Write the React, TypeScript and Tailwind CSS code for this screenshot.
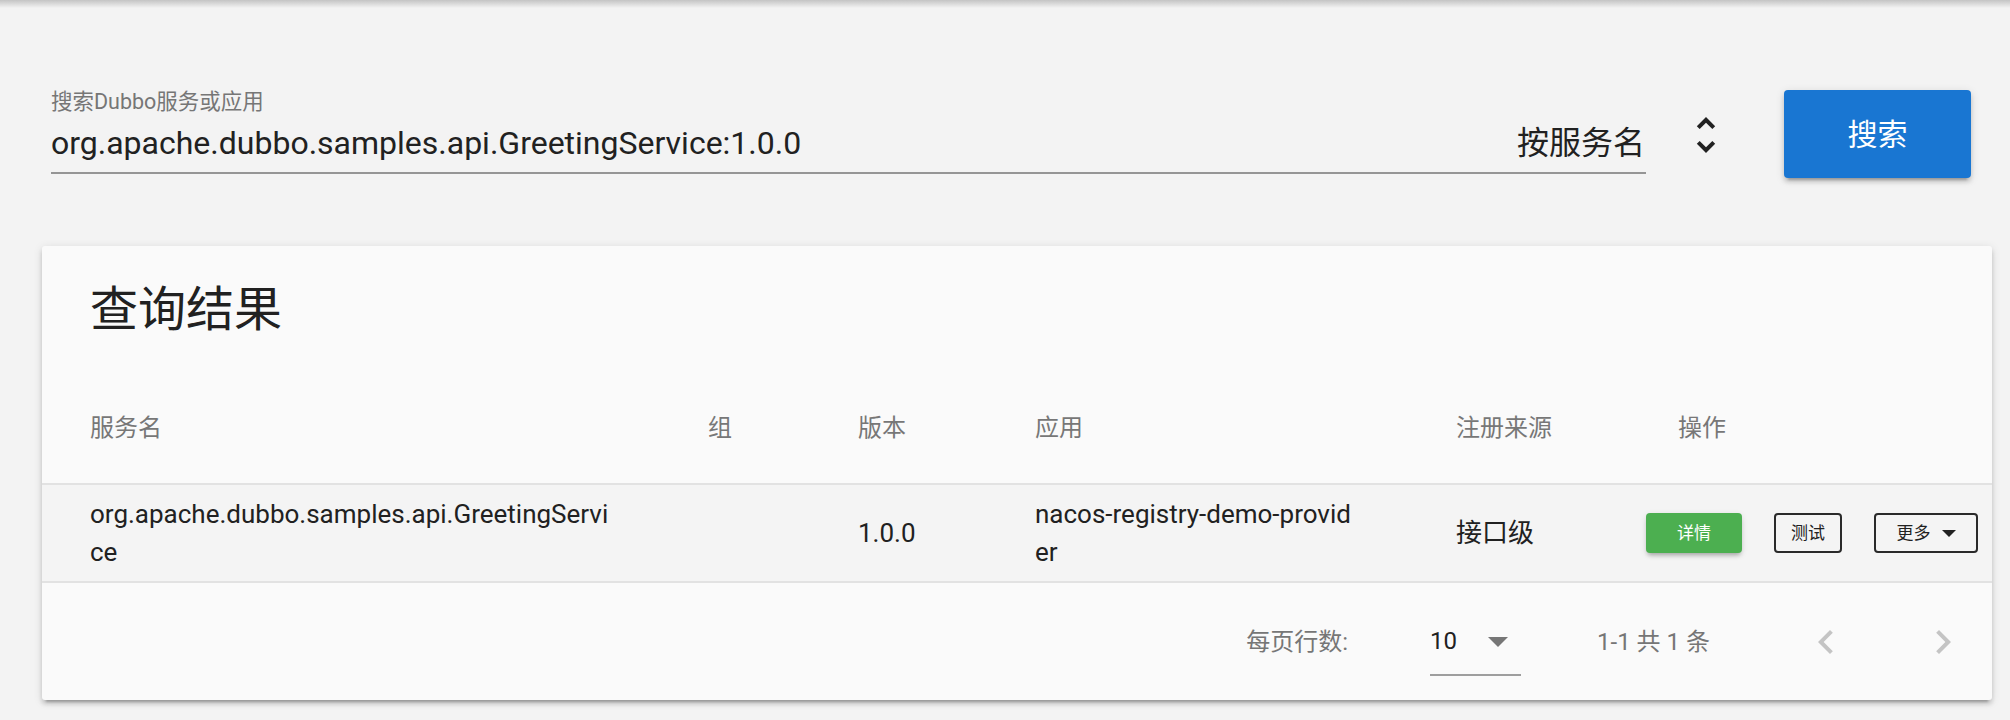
import React from "react";

type Col = { label: string; className: string };

const columns: Col[] = [
  { label: "服务名", className: "pl-[48px]" },
  { label: "组", className: "pl-[48px]" },
  { label: "版本", className: "pl-[48px]" },
  { label: "应用", className: "pl-[48px]" },
  { label: "注册来源", className: "pl-[48px]" },
  { label: "操作", className: "pl-[48px]" },
];

const UnfoldMore = () => (
  <svg viewBox="0 0 24 24" className="h-[48px] w-[48px] fill-[#212121]">
    <path d="M12 5.83L15.17 9l1.41-1.41L12 3 7.41 7.59 8.83 9 12 5.83zm0 12.34L8.83 15l-1.41 1.41L12 21l4.59-4.59L15.17 15 12 18.17z" />
  </svg>
);

const ArrowDrop = () => (
  <svg viewBox="0 0 24 24" className="h-[48px] w-[48px] fill-[#767676]">
    <path d="M7 10l5 5 5-5z" />
  </svg>
);

const ChevronLeft = () => (
  <svg viewBox="0 0 24 24" className="h-[48px] w-[48px] fill-[#c4c4c4]">
    <path d="M15.41 7.41L14 6l-6 6 6 6 1.41-1.41L10.83 12z" />
  </svg>
);

const ChevronRight = () => (
  <svg viewBox="0 0 24 24" className="h-[48px] w-[48px] fill-[#c4c4c4]">
    <path d="M10 6L8.59 7.41 13.17 12l-4.58 4.59L10 18l6-6z" />
  </svg>
);

const grid = "grid grid-cols-[618px_150px_177px_421px_222px_1fr]";

export default function App() {
  return (
    <div className="min-h-screen w-[2010px] overflow-hidden bg-[#f3f3f3] font-['Roboto','Noto_Sans_CJK_SC',sans-serif]">
      <div className="h-[8px] bg-linear-to-b from-[#c4c4c4] to-[#f3f3f3]" />

      {/* search bar */}
      <div className="flex pl-[51px] pt-[82px]">
        <div className="flex w-[1595px] flex-col">
          <div className="h-[24px] pt-[1px] text-[21.5px] leading-[22px] text-[#767676]">
            搜索Dubbo服务或应用
          </div>
          <div className="mt-[9px] flex items-center justify-between border-b-2 border-[#959595] pb-[9px] text-[32px] leading-[40px] text-[#212121]">
            <span>org.apache.dubbo.samples.api.GreetingService:1.0.0</span>
            <span className="pr-[1px]">按服务名</span>
          </div>
        </div>
        <div className="ml-[36px] mt-[21px]">
          <UnfoldMore />
        </div>
        <button className="ml-[54px] flex h-[88px] w-[187px] items-center justify-center rounded-[4px] bg-[#1976d2] text-[30px] text-white shadow-[0_6px_2px_-4px_rgba(0,0,0,0.2),0_4px_4px_0_rgba(0,0,0,0.14),0_2px_10px_0_rgba(0,0,0,0.12)]">
          搜索
        </button>
      </div>

      {/* result card */}
      <div className="ml-[42px] mt-[68px] w-[1950px] rounded-[3px] bg-[#fafafa] shadow-[0_6px_2px_-4px_rgba(0,0,0,0.2),0_4px_4px_0_rgba(0,0,0,0.14),0_2px_10px_0_rgba(0,0,0,0.12)]">
        <div className="h-[127px] pl-[48px] pt-[32px] text-[48px] leading-[64px] text-[#212121]">
          查询结果
        </div>

        <div className={`${grid} h-[112px] items-center border-b-2 border-[#e2e2e2] text-[24px] text-[#777777]`}>
          {columns.map((c) => (
            <div key={c.label} className={c.className}>
              {c.label}
            </div>
          ))}
        </div>

        <div className={`${grid} h-[98px] items-center border-b-2 border-[#e2e2e2] bg-[#f4f4f4] text-[26px] leading-[38px] text-[#212121]`}>
          <div className="break-all px-[48px]">org.apache.dubbo.samples.api.GreetingService</div>
          <div className="px-[48px]" />
          <div className="px-[48px]">1.0.0</div>
          <div className="break-all px-[48px]">nacos-registry-demo-provider</div>
          <div className="px-[48px]">接口级</div>
          <div className="flex items-center pl-[16px] text-[17px]">
            <button className="flex h-[40px] w-[96px] items-center justify-center rounded-[4px] bg-[#4caf50] text-white shadow-[0_4px_4px_-2px_rgba(0,0,0,0.25),0_2px_6px_0_rgba(0,0,0,0.12)]">
              详情
            </button>
            <button className="ml-[32px] flex h-[40px] w-[68px] items-center justify-center rounded-[4px] border-2 border-[#2a2a2a] text-[#212121]">
              测试
            </button>
            <button className="ml-[32px] flex h-[40px] w-[104px] items-center justify-center rounded-[4px] border-2 border-[#2a2a2a] text-[#212121]">
              <span>更多</span>
              <svg viewBox="0 0 14 7" className="ml-[11px] h-[7px] w-[14px] fill-[#212121]">
                <polygon points="0,0 14,0 7,7" />
              </svg>
            </button>
          </div>
        </div>

        <div className="flex h-[117px] items-center justify-end pr-[25px] text-[24px] text-[#767676]">
          <span>每页行数:</span>
          <div className="ml-[82px] flex h-[68px] w-[91px] items-center border-b-2 border-[#9e9e9e]">
            <span className="text-[#212121]">10</span>
            <div className="-mr-[1px] ml-auto">
              <ArrowDrop />
            </div>
          </div>
          <span className="ml-[76px]">1-1 共 1 条</span>
          <div className="ml-[92px]">
            <ChevronLeft />
          </div>
          <div className="ml-[69px]">
            <ChevronRight />
          </div>
        </div>
      </div>
    </div>
  );
}
